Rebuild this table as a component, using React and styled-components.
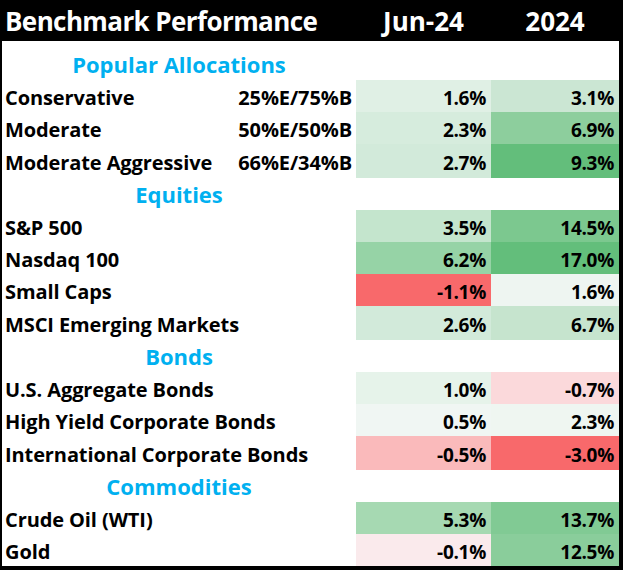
import styled, { createGlobalStyle } from "styled-components";

const Global = createGlobalStyle`
  body {
    margin: 0;
    background: #fff;
  }
`;

const Frame = styled.div`
  width: 617px;
  border-left: 2px solid #000;
  border-right: 4px solid #000;
  border-bottom: 4px solid #000;
  font-family: "Open Sans", Lato, sans-serif;
  font-weight: 700;
  color: #000;
`;

const Row = styled.div`
  display: grid;
  grid-template-columns: 354px 135px 128px;
  height: ${(p) => p.$h || 32}px;
`;

const HeaderRow = styled(Row)`
  background: #000;
  color: #fff;
  align-items: center;
`;

const Title = styled.div`
  font-size: 26px;
  padding-left: 3px;
  letter-spacing: -0.6px;
  white-space: nowrap;
`;

const ColHead = styled.div`
  font-size: 26px;
  text-align: center;
`;

const Section = styled.div`
  grid-column: 1;
  color: #00b0f0;
  font-size: 22px;
  text-align: center;
  align-self: end;
  padding-bottom: 1px;
`;

const Label = styled.div`
  display: flex;
  justify-content: space-between;
  align-items: center;
  padding: 3px 4px 0 3px;
  font-size: 20px;
  letter-spacing: -0.1px;
  white-space: nowrap;
`;

const Value = styled.div`
  display: flex;
  align-items: center;
  justify-content: flex-end;
  padding: 3px 5px 0 0;
  font-size: 19px;
  letter-spacing: -0.3px;
  background: ${(p) => p.$bg};
`;

const groups = [
  {
    name: "Popular Allocations",
    h: 39,
    rows: [
      ["Conservative", "25%E/75%B", "1.6%", "#e0f0e5", "3.1%", "#cbe6d3", 32],
      ["Moderate", "50%E/50%B", "2.3%", "#d6ecdd", "6.9%", "#8dce9d", 32],
      ["Moderate Aggressive", "66%E/34%B", "2.7%", "#d2eada", "9.3%", "#63be7b", 34],
    ],
  },
  {
    name: "Equities",
    h: 32,
    rows: [
      ["S&P 500", "", "3.5%", "#c4e5cd", "14.5%", "#7cc88f", 32],
      ["Nasdaq 100", "", "6.2%", "#96d3a6", "17.0%", "#63be7b", 32],
      ["Small Caps", "", "-1.1%", "#f8696b", "1.6%", "#eef5f1", 32],
      ["MSCI Emerging Markets", "", "2.6%", "#d2eada", "6.7%", "#c6e4ce", 34],
    ],
  },
  {
    name: "Bonds",
    h: 32,
    rows: [
      ["U.S. Aggregate Bonds", "", "1.0%", "#e6f3ea", "-0.7%", "#fbd9db", 32],
      ["High Yield Corporate Bonds", "", "0.5%", "#f0f6f3", "2.3%", "#eff6f1", 32],
      ["International Corporate Bonds", "", "-0.5%", "#fababb", "-3.0%", "#f8696b", 34],
    ],
  },
  {
    name: "Commodities",
    h: 32,
    rows: [
      ["Crude Oil (WTI)", "", "5.3%", "#a6d9b2", "13.7%", "#81ca94", 32],
      ["Gold", "", "-0.1%", "#faeaec", "12.5%", "#8acd9b", 32],
    ],
  },
];

export default function App() {
  return (
    <>
      <Global />
      <Frame>
        <HeaderRow $h={41}>
          <Title>Benchmark Performance</Title>
          <ColHead>Jun-24</ColHead>
          <ColHead>2024</ColHead>
        </HeaderRow>
        {groups.map((g) => (
          <div key={g.name}>
            <Row $h={g.h}>
              <Section>{g.name}</Section>
            </Row>
            {g.rows.map(([name, mix, a, aBg, b, bBg, h]) => (
              <Row key={name} $h={h}>
                <Label>
                  <span>{name}</span>
                  {mix && <span>{mix}</span>}
                </Label>
                <Value $bg={aBg}>{a}</Value>
                <Value $bg={bBg}>{b}</Value>
              </Row>
            ))}
          </div>
        ))}
      </Frame>
    </>
  );
}
